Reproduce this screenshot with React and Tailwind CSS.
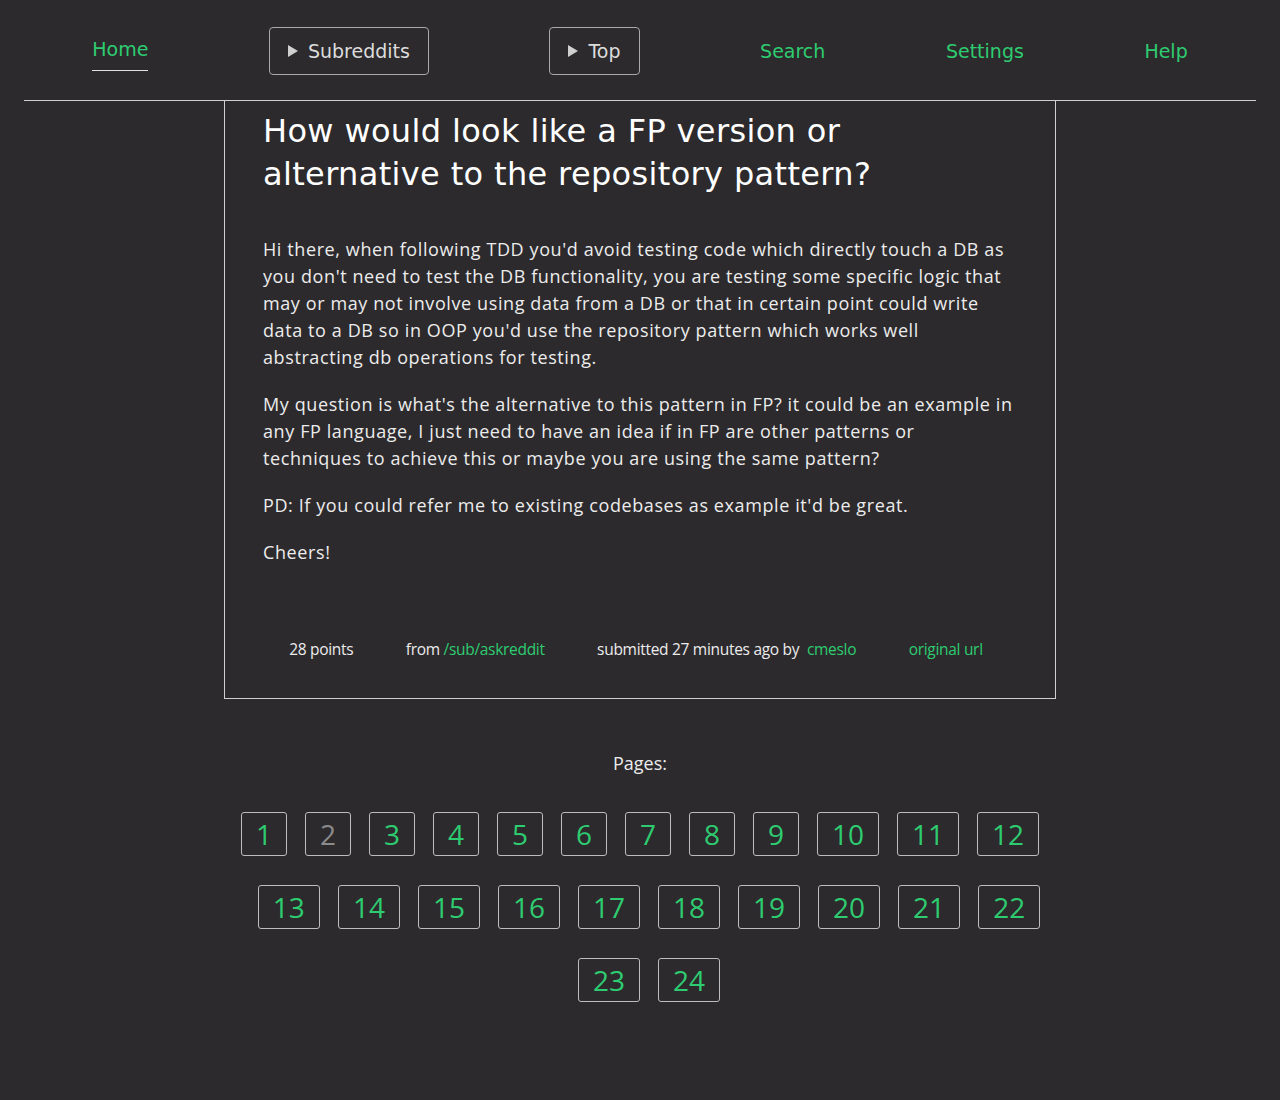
import React from 'react';

const navFont = { fontFamily: '"DejaVu Sans", sans-serif' };

const rows = [
    Array.from({ length: 12 }, (_, i) => i + 1),
    Array.from({ length: 10 }, (_, i) => i + 13),
    [23, 24],
];

const NavButton = ({ label }) => (
    <button className="h-12 pl-[18px] pr-[18px] flex items-center gap-[10px] border border-[#a9a9a9] rounded-[4px] text-[#dcdcdc] text-[19px]">
        <svg width="10" height="12" viewBox="0 0 10 12" className="shrink-0">
            <polygon points="0,0 10,6 0,12" fill="#d0d0d0" />
        </svg>
        <span>{label}</span>
    </button>
);

const App = () => {
    return (
        <div className="min-h-[1100px] bg-[#2c2a2c] px-6 font-['Open_Sans',sans-serif] text-[#ececec]">
            {/* Top navigation */}
            <nav className="h-[101px] border-b border-[#cfcfcf] flex items-center justify-around px-2 pt-[2px]" style={navFont}>
                <a className="text-[#2ecc71] text-[19px] border-b border-[#e0e0e0] pb-[7px] mt-[4px]">Home</a>
                <NavButton label="Subreddits" />
                <NavButton label="Top" />
                <a className="text-[#2ecc71] text-[19px]">Search</a>
                <a className="text-[#2ecc71] text-[19px]">Settings</a>
                <a className="text-[#2ecc71] text-[19px]">Help</a>
            </nav>

            {/* Post card */}
            <div className="w-[832px] mx-auto border border-t-0 border-[#cfcfcf] px-[38px] pt-[9px] pb-[39px]">
                <h1 className="text-[32px] leading-[43px] text-white font-normal tracking-[0.35px]" style={navFont}>
                    How would look like a FP version or alternative to the repository pattern?
                </h1>

                <div className="mt-[40px] flex flex-col gap-5 text-[18px] leading-[27px] tracking-[0.6px]">
                    <p>Hi there, when following TDD you'd avoid testing code which directly touch a DB as you don't need to test the DB functionality, you are testing some specific logic that may or may not involve using data from a DB or that in certain point could write data to a DB so in OOP you'd use the repository pattern which works well abstracting db operations for testing.</p>
                    <p>My question is what's the alternative to this pattern in FP? it could be an example in any FP language, I just need to have an idea if in FP are other patterns or techniques to achieve this or maybe you are using the same pattern?</p>
                    <p>PD: If you could refer me to existing codebases as example it'd be great.</p>
                    <p>Cheers!</p>
                </div>

                <div className="mt-[73px] flex justify-around text-[15.5px] leading-[20px] tracking-[-0.3px] pr-[8px]">
                    <span>28 points</span>
                    <span>from <a className="text-[#2ecc71]">/sub/askreddit</a></span>
                    <span>submitted 27 minutes ago by <a className="text-[#2ecc71] ml-1">cmeslo</a></span>
                    <a className="text-[#2ecc71]">original url</a>
                </div>
            </div>

            {/* Pagination */}
            <div className="mt-[51px] text-center text-[18px] leading-[27px]">Pages:</div>
            <div className="mt-[35px] flex flex-col gap-[29px]">
                {rows.map((row, r) => (
                    <div key={r} className={`flex justify-center gap-x-[18px] ${r > 0 ? 'pl-[18px]' : ''}`}>
                        {row.map((p) => (
                            <a
                                key={p}
                                className={`h-[44px] px-[14px] min-w-[46px] flex items-center justify-center border border-[#bdbdbd] rounded-[3px] text-[28px] leading-none ${p === 2 ? 'text-[#8a8a8a]' : 'text-[#2ecc71]'}`}
                            >
                                {p}
                            </a>
                        ))}
                    </div>
                ))}
            </div>
        </div>
    );
};

export default App;
